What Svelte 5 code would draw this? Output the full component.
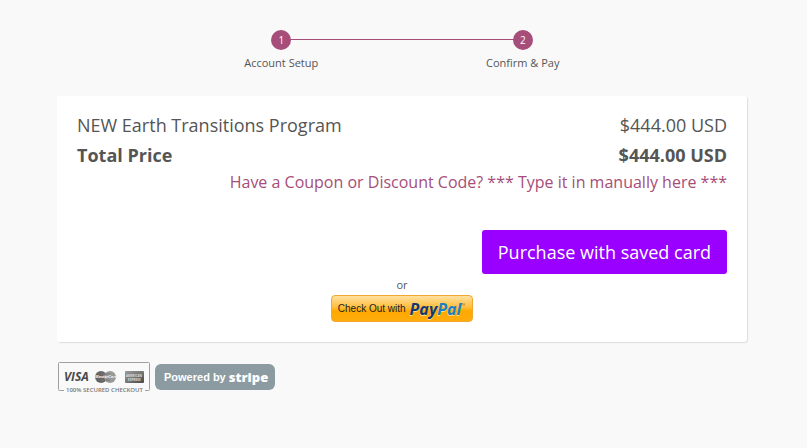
<script>
	let steps = ['Account Setup', 'Confirm & Pay'];
	let product = { name: 'NEW Earth Transitions Program', price: '$444.00 USD' };
	let total = '$444.00 USD';
</script>

<main class="page">
	<ol class="steps">
		{#each steps as step, i}
			<li class="step">
				<span class="step-number">{i + 1}</span>
				<span class="step-label">{step}</span>
			</li>
		{/each}
	</ol>

	<section class="card">
		<table class="prices">
			<tbody>
				<tr>
					<td>{product.name}</td>
					<td class="amount">{product.price}</td>
				</tr>
				<tr class="total">
					<td>Total Price</td>
					<td class="amount">{total}</td>
				</tr>
			</tbody>
		</table>
		<div class="coupon">
			<a href="#coupon">Have a Coupon or Discount Code? *** Type it in manually here ***</a>
		</div>

		<div class="purchase">
			<button type="button" class="btn-purchase">Purchase with saved card</button>
		</div>

		<div class="paypal">
			<span class="or">or</span>
			<button type="button" class="btn-paypal">
				<span class="checkout">Check Out with</span>
				<span class="paypal-word">Pay<span class="pal">Pal</span></span>
				<svg width="4" height="14" viewBox="0 0 4 14" aria-hidden="true">
					<path d="M0 1.5h1.6M.8 1.5v2M2 3.5v-2l.9 1 .9-1v2" fill="none" stroke="#8a6a2c" stroke-width="0.5" />
				</svg>
			</button>
		</div>
	</section>

	<footer class="badges">
		<svg class="cards" width="93" height="34" viewBox="0 0 93 34" role="img" aria-label="Secured checkout">
			<defs>
				<linearGradient id="amex" x1="0" y1="0" x2="1" y2="1">
					<stop offset="0" stop-color="#9a9a9a" />
					<stop offset="0.5" stop-color="#777" />
					<stop offset="1" stop-color="#484848" />
				</linearGradient>
			</defs>
			<path d="M7 28.5H2.5a1 1 0 0 1-1-1V1.5a1 1 0 0 1 1-1h89a1 1 0 0 1 1 1v26a1 1 0 0 1-1 1H88" fill="none" stroke="#a0a0a0" />
			<text class="visa" x="7" y="19" fill="#4a4a4a">VISA</text>
			<circle cx="44" cy="15" r="6" fill="#666" />
			<circle cx="53" cy="15" r="6" fill="#999" />
			<path d="M44 12h9M44 18h9" stroke="#777" stroke-width="1" />
			<text class="mastercard" x="38" y="16" fill="#eee">MasterCard</text>
			<rect x="68" y="9" width="19" height="12" rx="1" fill="url(#amex)" />
			<text class="amex" x="69" y="15" fill="#ddd">AMERICAN</text>
			<text class="amex" x="71" y="19" fill="#ddd">EXPRESS</text>
			<text class="secured" x="9" y="30" fill="#777">100% SECURED CHECKOUT</text>
		</svg>
		<a class="stripe" href="#stripe">
			<span>Powered by</span>
			<strong>stripe</strong>
		</a>
	</footer>
</main>

<style>
	:global(body) {
		margin: 0;
		background: #f9f9f9;
	}

	.page {
		padding: 30px 60px 24px 57px;
		font-family: 'Open Sans', 'Liberation Sans', sans-serif;
		color: #555;
	}

	.steps {
		display: flex;
		width: 70%;
		margin: 0 auto;
		padding: 0;
		list-style: none;
	}
	.step {
		position: relative;
		display: flex;
		flex: 1;
		flex-direction: column;
		align-items: center;
		gap: 4px;
	}
	/* line back to the previous step */
	.step + .step::before {
		content: '';
		position: absolute;
		top: 9px;
		right: 50%;
		width: 100%;
		height: 1px;
		background: #a64d79;
	}
	.step:first-child {
		z-index: 1;
	}
	.step-number {
		position: relative;
		z-index: 1;
		width: 20px;
		border-radius: 50%;
		background: #a64d79;
		color: #fff;
		font-size: 10px;
		line-height: 20px;
		text-align: center;
	}
	.step-label {
		font-size: 11px;
		line-height: 18px;
	}

	.card {
		margin-top: 24px;
		padding: 14px 20px 20px;
		border-radius: 3px;
		background: #fff;
		box-shadow: 1px 1px 1px #ddd;
	}
	.prices {
		width: 100%;
		border-collapse: collapse;
		font-size: 18px;
		line-height: 30px;
	}
	.prices td {
		padding: 0;
	}
	.prices .amount {
		text-align: right;
	}
	.total {
		font-weight: bold;
	}
	.coupon {
		font-size: 16px;
		line-height: 24px;
		text-align: right;
	}
	.coupon a {
		color: #a64d79;
		text-decoration: none;
	}

	.purchase {
		display: flex;
		justify-content: flex-end;
		margin-top: 36px;
	}
	.btn-purchase {
		padding: 0 16px;
		border: 0;
		border-radius: 3px;
		background: #90f;
		color: #fff;
		font-family: inherit;
		font-size: 18px;
		line-height: 44px;
		cursor: pointer;
	}

	.paypal {
		display: flex;
		flex-direction: column;
		align-items: center;
	}
	.or {
		font-size: 11px;
		line-height: 21px;
	}
	.btn-paypal {
		display: flex;
		align-items: center;
		height: 27px;
		padding: 0 7px 0 6px;
		border: 1px solid #f0a830;
		border-radius: 4px;
		background: linear-gradient(#ffe0a0, #ffbe3c 45%, #ffa800 60%, #ffac0d);
		cursor: pointer;
	}
	.checkout {
		margin-right: 4px;
		color: #222;
		font-family: 'Liberation Sans', Arial, sans-serif;
		font-size: 10px;
	}
	.paypal-word {
		color: #14376f;
		font-family: 'Open Sans', sans-serif;
		font-size: 16px;
		font-style: italic;
		font-weight: bold;
		line-height: 20px;
		text-shadow: 0 1px 0 #ffdc96;
	}
	.pal {
		color: #1a7fc1;
	}

	.badges {
		display: flex;
		align-items: flex-start;
		gap: 5px;
		margin-top: 20px;
	}
	.cards text {
		font-family: 'Open Sans', sans-serif;
		font-weight: bold;
	}
	.cards .visa {
		font-size: 12px;
		font-style: italic;
	}
	.cards .mastercard {
		font-size: 4px;
		font-style: italic;
	}
	.cards .amex {
		font-size: 3px;
	}
	.cards .secured {
		font-size: 6px;
		font-weight: 600;
	}
	.stripe {
		display: flex;
		align-items: center;
		gap: 3px;
		height: 26px;
		margin-top: 2px;
		padding: 0 7px 0 9px;
		border-radius: 6px;
		background: #8c9ba2;
		color: #fff;
		font-family: 'Liberation Sans', Arial, sans-serif;
		font-size: 11px;
		font-weight: bold;
		text-decoration: none;
	}
	.stripe strong {
		font-family: 'Open Sans', sans-serif;
		font-size: 13px;
		line-height: 20px;
	}
</style>
